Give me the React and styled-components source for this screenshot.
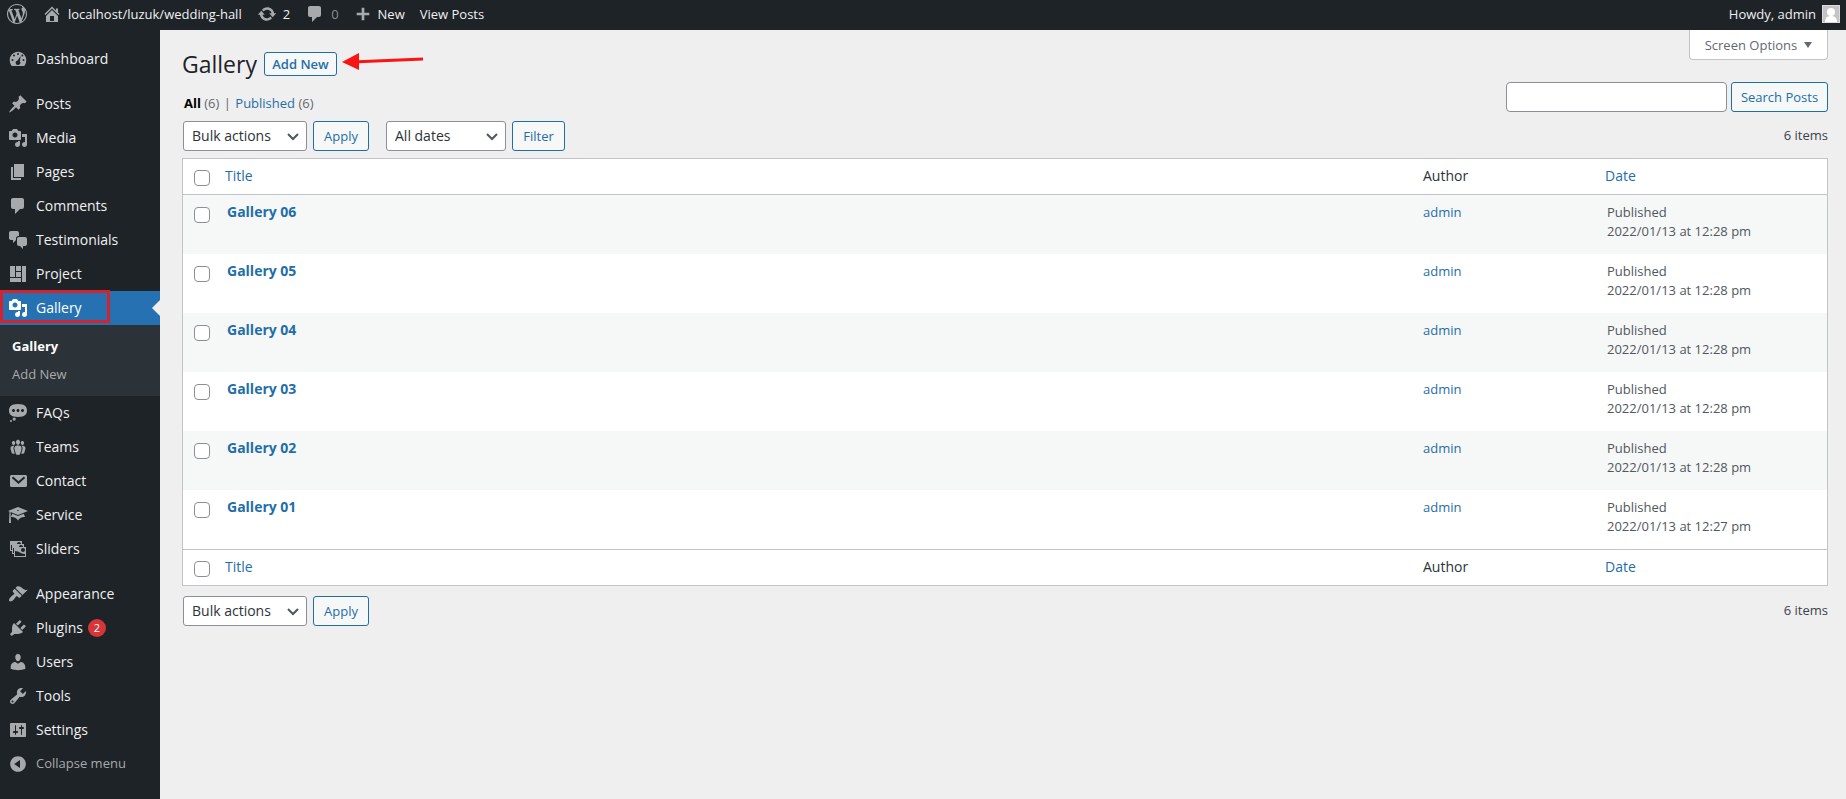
import React from "react";
import styled, { createGlobalStyle, css } from "styled-components";

const icons = {
  wordpress:
    "M20 10c0-5.51-4.49-10-10-10C4.48 0 0 4.49 0 10c0 5.52 4.48 10 10 10 5.51 0 10-4.48 10-10zM7.78 15.37L4.37 6.22c.55-.02 1.17-.08 1.17-.08.5-.06.44-1.13-.06-1.11 0 0-1.45.11-2.37.11-.18 0-.37 0-.58-.01C4.12 2.69 6.87 1.11 10 1.11c2.33 0 4.45.87 6.05 2.34-.68-.11-1.65.39-1.65 1.58 0 .74.45 1.36.9 2.1.35.61.55 1.36.55 2.46 0 1.49-1.4 5-1.4 5l-3.03-8.37c.54-.02.82-.17.82-.17.5-.05.44-1.25-.06-1.22 0 0-1.44.12-2.38.12-.87 0-2.33-.12-2.33-.12-.5-.03-.56 1.2-.06 1.22l.92.08 1.26 3.41zM17.41 10c.24-.64.74-1.87.43-4.25.7 1.29 1.05 2.71 1.05 4.25 0 3.29-1.73 6.24-4.4 7.78.97-2.59 1.94-5.2 2.92-7.78zM6.1 18.09C3.12 16.65 1.11 13.53 1.11 10c0-1.3.23-2.48.72-3.59C3.25 10.3 4.67 14.2 6.1 18.09zm4.03-6.63l2.58 6.98c-.86.29-1.76.45-2.71.45-.79 0-1.57-.11-2.29-.33.81-2.38 1.62-4.74 2.42-7.1z",
  home: "M16 8.5l1.53 1.53-1.06 1.06L10 4.6l-6.47 6.49-1.06-1.06L10 2.5l4 4v-2h2v4zm-6-2.46l6 5.99V18H4v-5.97zM12 17v-5H8v5h4z",
  update:
    "M10.2 3.28c3.53 0 6.43 2.61 6.92 6h2.08l-3.5 4-3.5-4h2.32c-.45-1.97-2.21-3.45-4.32-3.45-1.45 0-2.73.71-3.54 1.78L4.95 5.66C6.23 4.2 8.11 3.28 10.2 3.28zm-.4 13.44c-3.52 0-6.43-2.61-6.92-6H.8l3.5-4c1.17 1.33 2.33 2.67 3.5 4H5.48c.45 1.97 2.21 3.45 4.32 3.45 1.45 0 2.73-.71 3.54-1.78l1.71 1.95c-1.28 1.46-3.15 2.38-5.25 2.38z",
  plus: "M17 8.5v3h-5.5V17h-3v-5.5H3v-3h5.5V3h3v5.5z",
  dashboard:
    "M3.76 17h12.48c1.34-1.63 2.01-3.82 2.01-6 0-4.56-3.69-8.25-8.25-8.25S1.75 6.44 1.75 11c0 2.18.67 4.37 2.01 6zM10 4a1 1 0 1 1 0 2 1 1 0 0 1 0-2zM6 5.5a1 1 0 1 1 0 2 1 1 0 0 1 0-2zm8.3 0a1 1 0 1 1 0 2 1 1 0 0 1 0-2zM12.7 7l-.85 5.3a2.3 2.3 0 1 1-2.3-.9zM4.5 10a1 1 0 1 1 0 2 1 1 0 0 1 0-2zm11 0a1 1 0 1 1 0 2 1 1 0 0 1 0-2z",
  post: "M10.44 3.02l1.82-1.82 6.36 6.35-1.83 1.82c-1.05-.68-2.48-.57-3.41.36l-.75.75c-.92.93-1.04 2.35-.35 3.41l-1.83 1.82-2.41-2.41-2.8 2.79c-.42.42-3.38 2.71-3.8 2.29s1.86-3.39 2.28-3.81l2.79-2.79L4.1 9.36l1.83-1.82c1.05.69 2.48.57 3.4-.36l.75-.75c.93-.92 1.05-2.35.36-3.41z",
  media:
    "M13 11V4c0-.55-.45-1-1-1h-1.67L9 1H5L3.67 3H2c-.55 0-1 .45-1 1v7c0 .55.45 1 1 1h10c.55 0 1-.45 1-1zM7 4.5c1.38 0 2.5 1.12 2.5 2.5S8.38 9.5 7 9.5 4.5 8.38 4.5 7 5.62 4.5 7 4.5zM14 6h5v10.5c0 1.38-1.12 2.5-2.5 2.5S14 17.88 14 16.5s1.12-2.5 2.5-2.5c.17 0 .34.02.5.05V9h-3V6zm-4 8.05V13h2v3.5c0 1.38-1.12 2.5-2.5 2.5S7 17.88 7 16.5 8.12 14 9.5 14c.17 0 .34.02.5.05z",
  page: "M6 15V2h10v13H6zm-1 1h8v2H3V5h2v11z",
  comments:
    "M5 2h9c1.1 0 2 .9 2 2v7c0 1.1-.9 2-2 2h-2l-5 5v-5H5c-1.1 0-2-.9-2-2V4c0-1.1.9-2 2-2z",
  testimonial:
    "M11 6h-.82C9.07 6 8 7.2 8 8.16V10l-3 3v-3H3c-1.1 0-2-.9-2-2V3c0-1.1.9-2 2-2h6c1.1 0 2 .9 2 2v3zm0 1h6c1.1 0 2 .9 2 2v5c0 1.1-.9 2-2 2h-2v3l-3-3h-1c-1.1 0-2-.9-2-2V9c0-1.1.9-2 2-2z",
  layout: "M2 2h5v11H2V2zm6 0h5v5H8V2zm6 0h4v16h-4V2zM8 8h5v5H8V8zm-6 6h11v4H2v-4z",
  status:
    "M10 1c7 0 9 2.91 9 6.5S17 14 10 14s-9-2.91-9-6.5S3 1 10 1zM5.5 9C6.33 9 7 8.33 7 7.5S6.33 6 5.5 6 4 6.67 4 7.5 4.67 9 5.5 9zM10 9c.83 0 1.5-.67 1.5-1.5S10.83 6 10 6s-1.5.67-1.5 1.5S9.17 9 10 9zm4.5 0c.83 0 1.5-.67 1.5-1.5S15.33 6 14.5 6 13 6.67 13 7.5 13.67 9 14.5 9zM6.2 14.5a1.6 1.6 0 1 1 0 3.2 1.6 1.6 0 0 1 0-3.2zM3 17a1 1 0 1 1 0 2 1 1 0 0 1 0-2z",
  groups:
    "M8.03 4.46c-.29 1.28.55 3.46 1.97 3.46 1.41 0 2.25-2.18 1.96-3.46-.22-.98-1.08-1.63-1.96-1.63-.89 0-1.74.65-1.97 1.63zm-4.13.9c-.25 1.08.47 2.93 1.67 2.93s1.92-1.85 1.67-2.93c-.19-.83-.92-1.39-1.67-1.39s-1.48.56-1.67 1.39zm8.86 0c-.25 1.08.47 2.93 1.66 2.93 1.2 0 1.92-1.85 1.67-2.93-.19-.83-.92-1.39-1.67-1.39-.74 0-1.47.56-1.66 1.39zm-.59 11.43l1.25-4.3C14.2 10 12.71 8.47 10 8.47c-2.72 0-4.21 1.53-3.44 4.02l1.26 4.3C8.05 17.51 9 18 10 18c.98 0 1.94-.49 2.17-1.21zm-6.1-7.63c-.49.67-.96 1.83-.42 3.59l1.12 3.79c-.34.2-.77.31-1.2.31-.85 0-1.65-.41-1.85-1.03l-1.07-3.65c-.65-2.11.61-3.4 2.92-3.4.27 0 .54.02.79.06-.1.1-.2.22-.29.33zm8.35-.39c2.31 0 3.58 1.29 2.92 3.4l-1.07 3.65c-.2.62-1 1.03-1.85 1.03-.43 0-.86-.11-1.2-.31l1.11-3.77c.55-1.78.08-2.94-.42-3.61-.08-.11-.18-.23-.28-.33.25-.04.51-.06.79-.06z",
  email:
    "M3.5 4h14c.83 0 1.5.67 1.5 1.5v9c0 .83-.67 1.5-1.5 1.5h-14c-.83 0-1.5-.67-1.5-1.5v-9C2 4.67 2.67 4 3.5 4zm.3 2.9l6.7 6 6.7-6-1.3-1.4-5.4 4.7-5.4-4.7z",
  learn:
    "M10 10L2.54 7.02 3 18H1l.48-11.41L0 6l10-4 10 4zm0-5c-.55 0-1 .22-1 .5s.45.5 1 .5 1-.22 1-.5-.45-.5-1-.5zm0 6l5.57-2.23c.71.94 1.2 2.07 1.36 3.3-.3-.04-.61-.07-.93-.07-2.55 0-4.78 1.37-6 3.41C8.78 13.37 6.55 12 4 12c-.32 0-.63.03-.93.07.16-1.23.65-2.36 1.36-3.3z",
  images:
    "M4 15v-3H2V2h12v3h2v3h2v10H6v-3H4zm7-12c-1.1 0-2 .9-2 2h4c0-1.1-.89-2-2-2zm-7 8V6H3v5h1zm7-3h4c0-1.1-.89-2-2-2-1.1 0-2 .9-2 2zm-5 6V9H5v5h1zm9-1c1.1 0 2-.89 2-2 0-1.1-.9-2-2-2s-2 .9-2 2c0 1.11.9 2 2 2zm2 4v-2c-5 0-5-3-10-3v5h10z",
  appearance:
    "M14.48 11.06L7.41 3.99l1.5-1.5c.5-.56 2.3-.47 3.51.32 1.21.8 1.43 1.28 2.91 2.1 1.18.64 2.45 1.26 4.45.85zm-.71.71L6.7 4.7 4.93 6.47c-.39.39-.39 1.02 0 1.41l1.06 1.06c.39.39.39 1.03 0 1.42-.6.6-1.43 1.11-2.21 1.69-.35.26-.7.53-1.01.84C1.43 14.23.4 16.08 1.4 17.07c.99 1 2.84-.03 4.18-1.36.31-.31.58-.66.85-1.02.57-.78 1.08-1.61 1.69-2.21.39-.39 1.02-.39 1.41 0l1.06 1.06c.39.39 1.02.39 1.41 0z",
  plugins:
    "M13.11 4.36L9.87 7.6 8 5.73l3.24-3.24c.35-.34 1.05-.2 1.56.32.52.51.66 1.21.31 1.55zm-8 1.77l.91-1.12 9.01 9.01-1.19.84c-.71.71-2.63 1.16-3.82 1.16H6.14L4.9 17.26c-.59.59-1.54.59-2.12 0-.59-.58-.59-1.53 0-2.12l1.24-1.24v-3.88c0-1.13.4-3.19 1.09-3.89zm7.26 3.97l3.24-3.24c.34-.35 1.04-.21 1.55.31.52.51.66 1.21.31 1.55l-3.24 3.25z",
  users:
    "M10 9.25c-2.27 0-2.73-3.44-2.73-3.44C7 4.02 7.82 2 9.97 2c2.16 0 2.98 2.02 2.71 3.81 0 0-.41 3.44-2.68 3.44zm0 2.57L12.72 10c2.39 0 4.52 2.33 4.52 4.53v2.49s-3.65 1.13-7.24 1.13c-3.65 0-7.24-1.13-7.24-1.13v-2.49c0-2.25 1.94-4.48 4.47-4.48z",
  tools:
    "M16.68 9.77c-1.34 1.34-3.3 1.67-4.95.99l-5.41 6.52c-.99.99-2.59.99-3.58 0s-.99-2.59 0-3.57l6.52-5.42c-.68-1.65-.35-3.61.99-4.95 1.28-1.28 3.12-1.62 4.72-1.06l-2.89 2.89 2.82 2.82 2.86-2.87c.53 1.58.18 3.39-1.08 4.65zM3.81 16.21c.4.39 1.04.39 1.43 0 .4-.4.4-1.04 0-1.43-.39-.4-1.03-.4-1.43 0-.39.39-.39 1.03 0 1.43z",
  settings:
    "M18 16V4c0-.55-.45-1-1-1H3c-.55 0-1 .45-1 1v12c0 .55.45 1 1 1h14c.55 0 1-.45 1-1zM8 11h1c.55 0 1 .45 1 1s-.45 1-1 1H8v1.5c0 .28-.22.5-.5.5s-.5-.22-.5-.5V13H6c-.55 0-1-.45-1-1s.45-1 1-1h1V5.5c0-.28.22-.5.5-.5s.5.22.5.5V11zm5-2h-1c-.55 0-1-.45-1-1s.45-1 1-1h1V5.5c0-.28.22-.5.5-.5s.5.22.5.5V7h1c.55 0 1 .45 1 1s-.45 1-1 1h-1v5.5c0 .28-.22.5-.5.5s-.5-.22-.5-.5V9z",
  collapse:
    "M10 2.16c4.33 0 7.84 3.51 7.84 7.84s-3.51 7.84-7.84 7.84S2.16 14.33 2.16 10 5.71 2.16 10 2.16zm2 11.72V6.12L6.18 9.97z",
};

const menuGroups = [
  [{ label: "Dashboard", icon: "dashboard" }],
  [
    { label: "Posts", icon: "post" },
    { label: "Media", icon: "media" },
    { label: "Pages", icon: "page" },
    { label: "Comments", icon: "comments" },
    { label: "Testimonials", icon: "testimonial" },
    { label: "Project", icon: "layout" },
    { label: "Gallery", icon: "media", current: true, children: ["Gallery", "Add New"] },
    { label: "FAQs", icon: "status" },
    { label: "Teams", icon: "groups" },
    { label: "Contact", icon: "email" },
    { label: "Service", icon: "learn" },
    { label: "Sliders", icon: "images" },
  ],
  [
    { label: "Appearance", icon: "appearance" },
    { label: "Plugins", icon: "plugins", count: 2 },
    { label: "Users", icon: "users" },
    { label: "Tools", icon: "tools" },
    { label: "Settings", icon: "settings" },
  ],
];

const posts = [
  { title: "Gallery 06", date: "2022/01/13 at 12:28 pm" },
  { title: "Gallery 05", date: "2022/01/13 at 12:28 pm" },
  { title: "Gallery 04", date: "2022/01/13 at 12:28 pm" },
  { title: "Gallery 03", date: "2022/01/13 at 12:28 pm" },
  { title: "Gallery 02", date: "2022/01/13 at 12:28 pm" },
  { title: "Gallery 01", date: "2022/01/13 at 12:27 pm" },
];

const Icon = ({ name, size = 20 }) => (
  <IconSvg width={size} height={size} viewBox="0 0 20 20" aria-hidden="true">
    <path fillRule="evenodd" d={icons[name]} />
  </IconSvg>
);

const SelectField = ({ label, value, width }) => (
  <SelectBox $width={width}>
    <Select aria-label={label} defaultValue={value}>
      <option>{value}</option>
    </Select>
    <Chevron viewBox="0 0 12 8" aria-hidden="true">
      <path d="M1 1l5 5 5-5" />
    </Chevron>
  </SelectBox>
);

const AdminBar = () => (
  <Bar>
    <BarLink href="#" aria-label="About WordPress">
      <Icon name="wordpress" />
    </BarLink>
    <BarLink href="#">
      <Icon name="home" />
      localhost/luzuk/wedding-hall
    </BarLink>
    <BarLink href="#">
      <Icon name="update" />2
    </BarLink>
    <BarLink href="#" $muted>
      <Icon name="comments" />
      <span>0</span>
    </BarLink>
    <BarLink href="#">
      <Icon name="plus" size={18} />
      New
    </BarLink>
    <BarLink href="#">View Posts</BarLink>
    <Account href="#">
      Howdy, admin
      <Avatar viewBox="0 0 18 18" aria-hidden="true">
        <rect width="18" height="18" fill="#dcdcde" />
        <rect x="1" y="1" width="16" height="16" fill="#c3c4c7" />
        <circle cx="9" cy="7" r="4" fill="#fff" />
        <path d="M3 17c0-4 2-6 6-6s6 2 6 6z" fill="#fff" />
      </Avatar>
    </Account>
  </Bar>
);

const Menu = () => (
  <Sidebar>
    {menuGroups.map((group, index) => (
      <MenuGroup key={index}>
        {group.map((item) => (
          <li key={item.label}>
            <MenuLink href="#" $current={item.current}>
              <Icon name={item.icon} />
              <MenuLabel>{item.label}</MenuLabel>
              {item.count && <Badge>{item.count}</Badge>}
              {item.current && <Highlight />}
            </MenuLink>
            {item.children && (
              <Submenu>
                {item.children.map((child) => (
                  <li key={child}>
                    <SubmenuLink href="#" $current={child === item.label}>
                      {child}
                    </SubmenuLink>
                  </li>
                ))}
              </Submenu>
            )}
          </li>
        ))}
      </MenuGroup>
    ))}
    <Collapse type="button">
      <Icon name="collapse" />
      <MenuLabel>Collapse menu</MenuLabel>
    </Collapse>
  </Sidebar>
);

const HeadingCells = ({ id }) => (
  <tr>
    <CheckHeading>
      <Checkbox type="checkbox" id={id} aria-label="Select all" />
    </CheckHeading>
    <Heading>
      <Link href="#">Title</Link>
    </Heading>
    <Heading $indent>Author</Heading>
    <Heading>
      <Link href="#">Date</Link>
    </Heading>
  </tr>
);

const PostsTable = () => (
  <Table>
    <colgroup>
      <Col $width={34} />
      <col />
      <Col $width={184} />
      <Col $width={230} />
    </colgroup>
    <thead>
      <HeadingCells id="select-all-top" />
    </thead>
    <tbody>
      {posts.map((post) => (
        <Row key={post.title}>
          <CheckCell>
            <Checkbox type="checkbox" aria-label={`Select ${post.title}`} />
          </CheckCell>
          <Cell>
            <RowTitle href="#">{post.title}</RowTitle>
          </Cell>
          <Cell>
            <Link href="#">admin</Link>
          </Cell>
          <Cell>
            Published
            <br />
            {post.date}
          </Cell>
        </Row>
      ))}
    </tbody>
    <tfoot>
      <HeadingCells id="select-all-bottom" />
    </tfoot>
  </Table>
);

const App = () => {
  return (
    <>
      <GlobalStyle />
      <Page>
        <AdminBar />
        <Body>
          <Menu />
          <Main>
            <TitleRow>
              <TitleGroup>
                <Title>Gallery</Title>
                <AddNew href="#">
                  Add New
                  <Arrow viewBox="0 0 82 20" aria-hidden="true">
                    <path d="M10 11L81 8" stroke="#fb1414" strokeWidth="3" />
                    <path d="M0 11L17 2V19z" fill="#fb1414" />
                  </Arrow>
                </AddNew>
              </TitleGroup>
              <ScreenOptions type="button">
                Screen Options
                <Caret viewBox="0 0 8 6" aria-hidden="true">
                  <path d="M0 0h8L4 6z" />
                </Caret>
              </ScreenOptions>
            </TitleRow>
            <FilterRow>
              <Views>
                <AllLink href="#">All</AllLink> (6) <Divider>|</Divider>{" "}
                <Link href="#">Published</Link> (6)
              </Views>
              <Search onSubmit={(e) => e.preventDefault()}>
                <SearchInput type="search" aria-label="Search Posts" />
                <Button $width={97}>Search Posts</Button>
              </Search>
            </FilterRow>
            <TableNav>
              <SelectField label="Select bulk action" value="Bulk actions" width={124} />
              <Button type="button" $width={56}>
                Apply
              </Button>
              <DateFilter>
                <SelectField label="Filter by date" value="All dates" width={120} />
                <Button type="button" $width={53}>
                  Filter
                </Button>
              </DateFilter>
              <Count>6 items</Count>
            </TableNav>
            <PostsTable />
            <TableNav $bottom>
              <SelectField label="Select bulk action" value="Bulk actions" width={124} />
              <Button type="button" $width={56}>
                Apply
              </Button>
              <Count>6 items</Count>
            </TableNav>
          </Main>
        </Body>
      </Page>
    </>
  );
};

export default App;

const GlobalStyle = createGlobalStyle`
  *, *::before, *::after {
    box-sizing: border-box;
  }

  body {
    margin: 0;
    background: #efefef;
    color: #3c434a;
    font-family: "Open Sans", "Noto Sans", sans-serif;
    font-size: 13px;
    line-height: 19px;
  }

  a {
    text-decoration: none;
  }

  button, input, select {
    font-family: inherit;
    margin: 0;
  }
`;

const blue = "#1f6ea8";

const listReset = css`
  list-style: none;
  margin: 0;
  padding: 0;
`;

const Page = styled.div`
  display: flex;
  flex-direction: column;
  min-height: 100vh;
`;

const IconSvg = styled.svg`
  flex: none;
  fill: #a7aaad;
`;

/* admin bar */

const Bar = styled.header`
  display: flex;
  align-items: center;
  gap: 15px;
  height: 30px;
  padding: 0 6px 2px 7px;
  background: #1d2327;
`;

const BarLink = styled.a`
  display: flex;
  align-items: center;
  gap: 6px;
  color: #f0f0f1;

  span {
    color: ${(props) => (props.$muted ? "#8c8f94" : "inherit")};
  }
`;

const Account = styled(BarLink)`
  margin-left: auto;
`;

const Avatar = styled.svg`
  width: 18px;
  height: 18px;
`;

/* side menu */

const Body = styled.div`
  display: flex;
  flex: 1;
`;

const Sidebar = styled.nav`
  flex: none;
  width: 160px;
  padding-top: 12px;
  background: #1d2327;
  font-size: 14px;
`;

const MenuGroup = styled.ul`
  ${listReset}

  & + & {
    margin-top: 11px;
  }
`;

const MenuLink = styled.a`
  position: relative;
  display: flex;
  align-items: center;
  gap: 8px;
  height: 34px;
  padding-left: 8px;
  color: #f0f0f1;

  ${(props) =>
    props.$current &&
    css`
      background: #2671b1;
      color: #fff;

      ${IconSvg} {
        fill: #fff;
      }

      &::after {
        content: "";
        position: absolute;
        right: 0;
        top: 9px;
        border: 8px solid transparent;
        border-left-width: 0;
        border-right-color: #efefef;
      }
    `}
`;

const MenuLabel = styled.span`
  padding-bottom: 2px;
`;

/* red frame round the open section */
const Highlight = styled.span`
  position: absolute;
  left: 0;
  top: -1px;
  width: 110px;
  height: 33px;
  border: 3px solid #d2232e;
`;

const Badge = styled.span`
  min-width: 18px;
  margin-left: -3px;
  border-radius: 9px;
  background: #d63638;
  color: #fff;
  font-size: 11px;
  line-height: 18px;
  text-align: center;
`;

const Submenu = styled.ul`
  ${listReset}
  padding: 7px 0 8px;
  background: #2c3338;
`;

const SubmenuLink = styled.a`
  display: block;
  padding-left: 12px;
  color: ${(props) => (props.$current ? "#fff" : "#a7aaad")};
  font-size: 13px;
  font-weight: ${(props) => (props.$current ? 700 : 400)};
  line-height: 28px;
`;

const Collapse = styled.button`
  display: flex;
  align-items: center;
  gap: 8px;
  height: 34px;
  padding: 0 0 0 8px;
  border: 0;
  background: none;
  color: #a7aaad;
  font-size: 13px;
`;

/* content */

const Main = styled.main`
  flex: 1;
  min-width: 0;
  padding: 0 18px 0 22px;
`;

const TitleRow = styled.div`
  display: flex;
  justify-content: space-between;
  align-items: flex-start;
  height: 52px;
`;

const TitleGroup = styled.div`
  display: flex;
  align-items: center;
  gap: 7px;
  padding-top: 20px;
`;

const Title = styled.h1`
  margin: 0;
  color: #1d2327;
  font-size: 23px;
  font-weight: 400;
  line-height: 28px;
`;

const AddNew = styled.a`
  position: relative;
  min-width: 73px;
  border: 1px solid ${blue};
  border-radius: 3px;
  background: #f6f7f7;
  color: ${blue};
  font-weight: 600;
  line-height: 22px;
  text-align: center;
`;

const Arrow = styled.svg`
  position: absolute;
  left: 100%;
  top: -2px;
  width: 82px;
  height: 20px;
  margin-left: 6px;
`;

const ScreenOptions = styled.button`
  display: flex;
  align-items: center;
  justify-content: center;
  gap: 7px;
  width: 139px;
  height: 30px;
  padding: 0;
  border: 1px solid #c3c4c7;
  border-top: 0;
  border-radius: 0 0 4px 4px;
  background: #fff;
  color: #646970;
  font-size: 13px;
`;

const Caret = styled.svg`
  width: 8px;
  height: 6px;
  fill: #646970;
`;

const FilterRow = styled.div`
  display: flex;
  align-items: flex-end;
  justify-content: space-between;
`;

const Link = styled.a`
  color: ${blue};
`;

const Views = styled.div`
  padding-left: 2px;
  color: #646970;
  line-height: 17px;
`;

const AllLink = styled.a`
  color: #000;
  font-weight: 700;
`;

const Divider = styled.span`
  margin: 0 1px;
`;

const Search = styled.form`
  display: flex;
  gap: 4px;
`;

const SearchInput = styled.input`
  width: 221px;
  height: 30px;
  padding: 0 8px;
  border: 1px solid #8c8f94;
  border-radius: 4px;
  background: #fff;
  font-size: 14px;
`;

const Button = styled.button`
  min-width: ${(props) => props.$width}px;
  height: 30px;
  padding: 0;
  border: 1px solid ${blue};
  border-radius: 3px;
  background: #f6f7f7;
  color: ${blue};
  font-size: 13px;
`;

const TableNav = styled.div`
  display: flex;
  align-items: center;
  gap: 6px;
  margin: ${(props) => (props.$bottom ? "10px 0 0" : "9px 0 7px")};
  padding-left: 1px;
`;

const DateFilter = styled.div`
  display: flex;
  gap: 6px;
  margin-left: 11px;
`;

const SelectBox = styled.div`
  position: relative;
  width: ${(props) => props.$width}px;
`;

const Select = styled.select`
  display: block;
  appearance: none;
  width: 100%;
  height: 30px;
  padding: 0 24px 2px 8px;
  border: 1px solid #8c8f94;
  border-radius: 3px;
  background: #fff;
  color: #2c3338;
  font-size: 14px;
`;

const Chevron = styled.svg`
  position: absolute;
  right: 8px;
  top: 12px;
  width: 12px;
  height: 8px;
  fill: none;
  stroke: #50575e;
  stroke-width: 2;
  pointer-events: none;
`;

const Count = styled.span`
  margin-left: auto;
  padding-bottom: 2px;
`;

/* posts table */

const Table = styled.table`
  width: 100%;
  table-layout: fixed;
  border: 1px solid #c3c4c7;
  border-collapse: separate;
  border-spacing: 0;
  background: #fff;

  thead th {
    border-bottom: 1px solid #c3c4c7;
  }

  tfoot th {
    border-top: 1px solid #c3c4c7;
  }
`;

const Col = styled.col`
  width: ${(props) => props.$width}px;
`;

const Heading = styled.th`
  height: 36px;
  padding: 7px ${(props) => (props.$indent ? 10 : 8)}px;
  color: #2c3338;
  font-size: 14px;
  font-weight: 400;
  line-height: 19px;
  text-align: left;
  vertical-align: top;
`;

const CheckHeading = styled.th`
  padding: 11px 0 0 11px;
  text-align: left;
  vertical-align: top;
`;

const Row = styled.tr`
  &:nth-child(odd) {
    background: #f6f7f7;
  }
`;

const Cell = styled.td`
  height: 59px;
  padding: 8px 10px;
  color: #50575e;
  line-height: 19px;
  vertical-align: top;
`;

const CheckCell = styled.td`
  padding: 12px 0 0 11px;
  vertical-align: top;
`;

const RowTitle = styled(Link)`
  display: block;
  font-size: 14px;
  font-weight: 700;
  line-height: 17px;
`;

const Checkbox = styled.input`
  display: block;
  appearance: none;
  width: 16px;
  height: 16px;
  border: 1px solid #8c8f94;
  border-radius: 4px;
  background: #fff;
`;
